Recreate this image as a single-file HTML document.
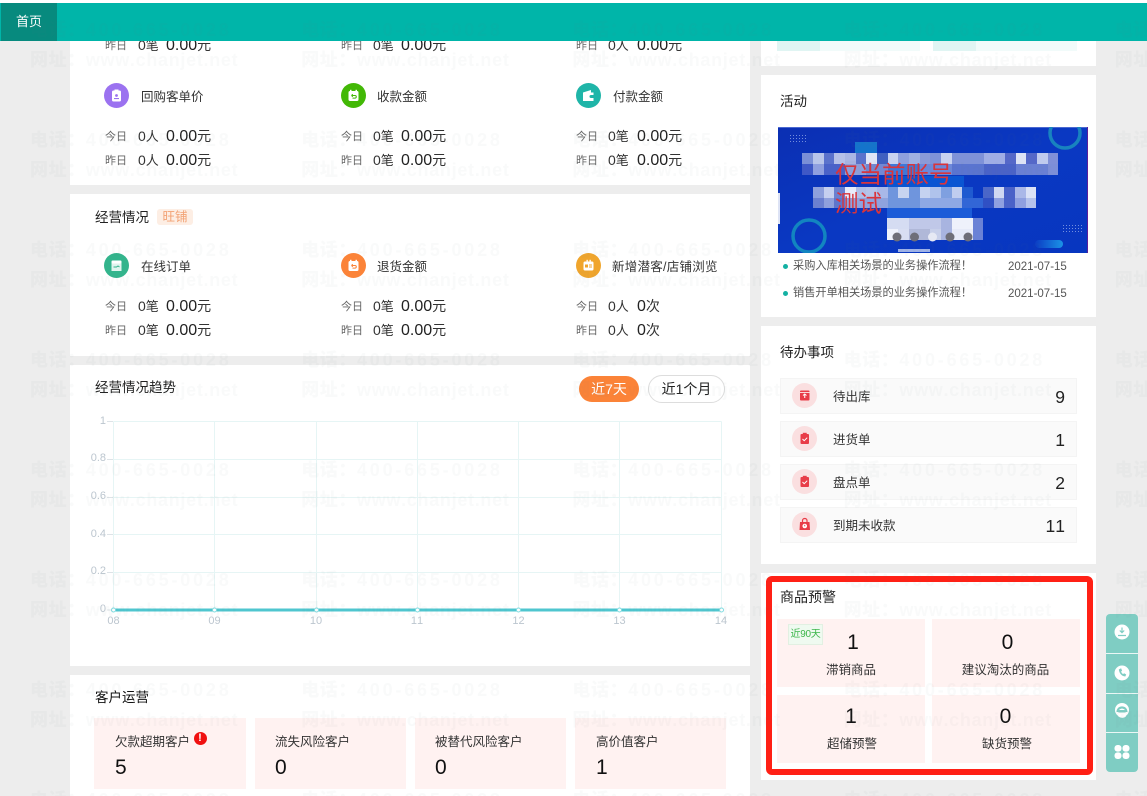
<!DOCTYPE html>
<html lang="zh"><head><meta charset="utf-8"><title>首页</title>
<style>
html,body{margin:0;padding:0;width:1147px;height:796px;overflow:hidden}
body{background:#ededed;font-family:"Liberation Sans","Noto Sans CJK SC",sans-serif;color:#333;font-kerning:none}
#p{position:relative;width:1147px;height:796px;overflow:hidden}
.c,.b,.t,.ic{position:absolute}
.c{background:#fff}
.b{box-sizing:border-box}
.t{white-space:nowrap;line-height:20px;font-size:12.5px}
.h{font-size:13.5px;color:#222;margin-top:1px}
.l{font-size:11px;color:#666}
.v{font-size:14px;color:#333}
.v small{font-size:13px}
.a{font-size:16px;color:#222;margin-top:1px}
.a small{font-size:14px;color:#333}
.ic{width:25px;height:25px;border-radius:50%}
.ic svg{position:absolute;left:0;top:0;width:25px;height:25px}
.pk{background:#fff2f1}
.td{background:#fafafa;border:1px solid #f4f4f4;left:780px;width:297px;height:36px}
.n{font-size:17.5px;color:#222;margin-top:1px}
.big{font-size:21px;color:#111;transform:translateX(-50%);margin-top:1px}
.ctr{transform:translateX(-50%)}
.li{font-size:11.2px;color:#555}
.dt{font-size:11.5px;color:#555;margin-top:1px}
.wm{position:absolute;left:30px;white-space:nowrap;font-size:18px;line-height:24px;color:rgba(110,115,125,.038);font-weight:bold;z-index:50;pointer-events:none}
.wm i{font-style:normal;display:inline-block;width:271.2px}
.wm b{letter-spacing:.6px}
.wp{letter-spacing:2.8px}
.wu{letter-spacing:.7px;margin-top:-1px}
.y{position:absolute;font-size:11px;line-height:12px;color:#bcc6cf;text-align:right;width:30px;left:76px}
.x{position:absolute;font-size:11px;line-height:12px;color:#bcc6cf;width:30px;text-align:center;top:615px}
</style></head>
<body><div id="p">
<!-- cards -->
<div class="c" style="left:70px;top:30px;width:680px;height:155px"></div>
<div class="c" style="left:70px;top:194px;width:680px;height:162px"></div>
<div class="c" style="left:70px;top:365px;width:680px;height:301px"></div>
<div class="c" style="left:70px;top:675px;width:680px;height:130px"></div>
<div class="c" style="left:761px;top:30px;width:335px;height:36px"></div>
<div class="c" style="left:761px;top:75px;width:335px;height:242px"></div>
<div class="c" style="left:761px;top:326px;width:335px;height:238px"></div>
<div class="c" style="left:761px;top:573px;width:335px;height:207px"></div>

<!-- top section -->
<div class="b" style="left:777px;top:41px;width:43px;height:10px;background:#e0f5f3"></div>
<div class="b" style="left:820px;top:41px;width:100px;height:10px;background:#f1fbfa"></div>
<div class="b" style="left:933px;top:41px;width:43px;height:10px;background:#e0f5f3"></div>
<div class="b" style="left:976px;top:41px;width:101px;height:10px;background:#f1fbfa"></div>

<div class="t l" style="left:105px;top:36px">昨日</div><div class="t v" style="left:138px;top:35px">0<small>笔</small></div><div class="t a" style="left:166px;top:34px">0.00<small>元</small></div>
<div class="t l" style="left:341px;top:36px">昨日</div><div class="t v" style="left:373px;top:35px">0<small>笔</small></div><div class="t a" style="left:401px;top:34px">0.00<small>元</small></div>
<div class="t l" style="left:576px;top:36px">昨日</div><div class="t v" style="left:608px;top:35px">0<small>人</small></div><div class="t a" style="left:637px;top:34px">0.00<small>元</small></div>

<!-- row: repurchase -->
<div class="ic" style="left:104px;top:83px;background:#9b72f0"><svg viewBox="0 0 25 25"><path d="M8 9a1.500 1.500 0 0 1 1.500-1.500h1V6.500h4v1h1A1.500 1.500 0 0 1 17 9v8a1.500 1.500 0 0 1-1.500 1.500h-6A1.500 1.500 0 0 1 8 17z" fill="#fff"/><circle cx="12.500" cy="12.500" r="1.400" fill="#9b72f0"/><rect x="10" y="15" width="5" height="1.100" fill="#9b72f0"/></svg></div>
<div class="t" style="left:141px;top:87px">回购客单价</div>
<div class="ic" style="left:341px;top:83px;background:#42b806"><svg viewBox="0 0 25 25"><rect x="7.500" y="8" width="10" height="10" rx="1.500" fill="#fff"/><rect x="9" y="6.800" width="1.500" height="2.500" fill="#fff"/><rect x="14.500" y="6.800" width="1.500" height="2.500" fill="#fff"/><path d="M10.500 12.500h3.500a1.300 1.300 0 0 1 0 2.600h-2.500M10.500 12.500l1.300-1.300M10.500 12.500l1.300 1.300" stroke="#42b806" stroke-width="1" fill="none"/></svg></div>
<div class="t" style="left:377px;top:87px">收款金额</div>
<div class="ic" style="left:576px;top:83px;background:#1fb5a8"><svg viewBox="0 0 25 25"><path d="M7 9.500 15 7v2.500h2.500V12H15a1.500 1.500 0 0 0 0 3h2.500v3H7z" fill="#fff"/></svg></div>
<div class="t" style="left:613px;top:87px">付款金额</div>

<div class="t l" style="left:105px;top:127px">今日</div><div class="t v" style="left:138px;top:126px">0<small>人</small></div><div class="t a" style="left:166px;top:125px">0.00<small>元</small></div>
<div class="t l" style="left:105px;top:151px">昨日</div><div class="t v" style="left:138px;top:150px">0<small>人</small></div><div class="t a" style="left:166px;top:149px">0.00<small>元</small></div>
<div class="t l" style="left:341px;top:127px">今日</div><div class="t v" style="left:373px;top:126px">0<small>笔</small></div><div class="t a" style="left:401px;top:125px">0.00<small>元</small></div>
<div class="t l" style="left:341px;top:151px">昨日</div><div class="t v" style="left:373px;top:150px">0<small>笔</small></div><div class="t a" style="left:401px;top:149px">0.00<small>元</small></div>
<div class="t l" style="left:576px;top:127px">今日</div><div class="t v" style="left:608px;top:126px">0<small>笔</small></div><div class="t a" style="left:637px;top:125px">0.00<small>元</small></div>
<div class="t l" style="left:576px;top:151px">昨日</div><div class="t v" style="left:608px;top:150px">0<small>笔</small></div><div class="t a" style="left:637px;top:149px">0.00<small>元</small></div>

<!-- operating -->
<div class="t h" style="left:95px;top:207px">经营情况</div>
<div class="t" style="left:157px;top:209px;width:36px;height:16px;line-height:16px;background:#fdeee4;color:#f2a274;border-radius:3px;text-align:center;font-size:12.5px">旺铺</div>

<div class="ic" style="left:104px;top:253px;background:#33b48c"><svg viewBox="0 0 25 25"><path d="M7.500 9h10v9h-10z" fill="#fff" opacity=".85"/><rect x="7.500" y="7.500" width="10" height="3" rx="1" fill="#fff"/><path d="M9.500 14h3l1.500-1 1.500 1" stroke="#33b48c" fill="none"/></svg></div>
<div class="t" style="left:141px;top:257px">在线订单</div>
<div class="ic" style="left:341px;top:253px;background:#fb8338"><svg viewBox="0 0 25 25"><rect x="7.500" y="8" width="10" height="10" rx="1.500" fill="#fff"/><rect x="9" y="6.800" width="1.500" height="2.500" fill="#fff"/><rect x="14.500" y="6.800" width="1.500" height="2.500" fill="#fff"/><path d="M10.500 12.500h3.500a1.300 1.300 0 0 1 0 2.600h-2.500M10.500 12.500l1.300-1.300M10.500 12.500l1.300 1.300" stroke="#fb8338" stroke-width="1" fill="none"/></svg></div>
<div class="t" style="left:377px;top:257px">退货金额</div>
<div class="ic" style="left:576px;top:253px;background:#f0a52c"><svg viewBox="0 0 25 25"><rect x="7.500" y="8.500" width="10" height="9" rx="1.500" fill="#fff"/><rect x="10.500" y="6.800" width="1.300" height="3" fill="#fff"/><rect x="13.500" y="6.800" width="1.300" height="3" fill="#fff"/><rect x="9" y="11.500" width="3" height="3" fill="#f0a52c"/><rect x="13" y="11.500" width="3" height="1" fill="#f0a52c"/><rect x="13" y="13.500" width="3" height="1" fill="#f0a52c"/></svg></div>
<div class="t" style="left:612px;top:257px;letter-spacing:.25px">新增潜客/店铺浏览</div>

<div class="t l" style="left:105px;top:297px">今日</div><div class="t v" style="left:138px;top:296px">0<small>笔</small></div><div class="t a" style="left:166px;top:295px">0.00<small>元</small></div>
<div class="t l" style="left:105px;top:321px">昨日</div><div class="t v" style="left:138px;top:320px">0<small>笔</small></div><div class="t a" style="left:166px;top:319px">0.00<small>元</small></div>
<div class="t l" style="left:341px;top:297px">今日</div><div class="t v" style="left:373px;top:296px">0<small>笔</small></div><div class="t a" style="left:401px;top:295px">0.00<small>元</small></div>
<div class="t l" style="left:341px;top:321px">昨日</div><div class="t v" style="left:373px;top:320px">0<small>笔</small></div><div class="t a" style="left:401px;top:319px">0.00<small>元</small></div>
<div class="t l" style="left:576px;top:297px">今日</div><div class="t v" style="left:608px;top:296px">0<small>人</small></div><div class="t a" style="left:637px;top:295px">0<small>次</small></div>
<div class="t l" style="left:576px;top:321px">昨日</div><div class="t v" style="left:608px;top:320px">0<small>人</small></div><div class="t a" style="left:637px;top:319px">0<small>次</small></div>

<!-- trend -->
<div class="t h" style="left:95px;top:377px">经营情况趋势</div>
<div class="t" style="left:579px;top:376px;width:60px;height:26px;line-height:26px;border-radius:13px;background:#fb8338;color:#fff;text-align:center;font-size:14px">近7天</div>
<div class="t b" style="left:648px;top:375px;width:77px;height:28px;line-height:26px;border-radius:14px;border:1px solid #ddd;background:#fff;color:#222;text-align:center;font-size:14px">近1个月</div>

<svg class="b" style="left:100px;top:410px" width="640" height="210" viewBox="100 410 640 210">
<g stroke="#e6f5f5" stroke-width="1" fill="none">
<path d="M113.500 421.500H721.500M113.500 459.500H721.500M113.500 497.500H721.500M113.500 534.500H721.500M113.500 572.500H721.500"/>
<path d="M113.500 421.500V610M214.500 421.500V610M316.500 421.500V610M417.500 421.500V610M518.500 421.500V610M619.500 421.500V610M721.500 421.500V610"/>
</g>
<path d="M107 421.500h6M107 459.500h6M107 497.500h6M107 534.500h6M107 572.500h6M107 610h6" stroke="#dde3e7"/>
<path d="M113.500 610H721.500" stroke="#4fc6cf" stroke-width="3"/>
<g fill="#fff" stroke="#7fdbe0" stroke-width="1">
<circle cx="113.500" cy="610" r="2"/><circle cx="214.500" cy="610" r="2"/><circle cx="316.500" cy="610" r="2"/><circle cx="417.500" cy="610" r="2"/><circle cx="518.500" cy="610" r="2"/><circle cx="619.500" cy="610" r="2"/><circle cx="721.500" cy="610" r="2"/>
</g>
</svg>
<div class="y" style="top:415px">1</div>
<div class="y" style="top:452px">0.8</div>
<div class="y" style="top:490px">0.6</div>
<div class="y" style="top:528px">0.4</div>
<div class="y" style="top:565px">0.2</div>
<div class="y" style="top:603px">0</div>
<div class="x" style="left:98.500px">08</div>
<div class="x" style="left:199.500px">09</div>
<div class="x" style="left:301px">10</div>
<div class="x" style="left:402px">11</div>
<div class="x" style="left:503.500px">12</div>
<div class="x" style="left:604.500px">13</div>
<div class="x" style="left:706px">14</div>

<!-- customers -->
<div class="t h" style="left:95px;top:687px;color:#111">客户运营</div>
<div class="b pk" style="left:94px;top:718px;width:152px;height:71px"></div>
<div class="b pk" style="left:255px;top:718px;width:151px;height:71px"></div>
<div class="b pk" style="left:415px;top:718px;width:151px;height:71px"></div>
<div class="b pk" style="left:575px;top:718px;width:151px;height:71px"></div>
<div class="t" style="left:115px;top:732px">欠款超期客户</div>
<div class="b" style="left:193.500px;top:732px;width:13px;height:13px;border-radius:50%;background:#f01010;color:#fff;font-size:11px;line-height:13px;text-align:center;font-weight:bold">!</div>
<div class="t" style="left:275px;top:732px">流失风险客户</div>
<div class="t" style="left:435px;top:732px">被替代风险客户</div>
<div class="t" style="left:596px;top:732px">高价值客户</div>
<div class="t" style="left:115px;top:758px;font-size:21px;color:#111">5</div>
<div class="t" style="left:275px;top:758px;font-size:21px;color:#111">0</div>
<div class="t" style="left:435px;top:758px;font-size:21px;color:#111">0</div>
<div class="t" style="left:596px;top:758px;font-size:21px;color:#111">1</div>

<!-- activity -->
<div class="t" style="left:780px;top:92px;font-size:13.5px;color:#222">活动</div>
<svg class="b" style="left:778px;top:127px" width="310" height="126" viewBox="778 127 310 126">
<defs><linearGradient id="bg" x1="0" y1="0" x2="1" y2="1"><stop offset="0" stop-color="#0b2fb3"/><stop offset=".5" stop-color="#0a38c2"/><stop offset="1" stop-color="#0736c0"/></linearGradient><linearGradient id="bar" x1="0" x2="1"><stop offset="0" stop-color="#0b3cc4"/><stop offset="1" stop-color="#1b93e6"/></linearGradient></defs>
<rect x="778" y="127" width="309" height="126" fill="url(#bg)"/>
<rect x="1087" y="127" width="1" height="126" fill="#5a1f9a"/>
<rect x="778" y="127" width="309" height="1" fill="#4a68d0"/>
<rect x="778" y="193" width="2" height="31" fill="#dde3f5"/>
<rect x="855" y="142" width="22" height="11" fill="#1474cc"/>
<rect x="887" y="176" width="77" height="44" fill="#0a55d2"/>
<rect x="887" y="208" width="85" height="11" fill="#1c5cd8"/>
<circle cx="1065" cy="133" r="15" fill="none" stroke="#1883bf" stroke-width="3.500"/>
<circle cx="809" cy="236" r="16" fill="none" stroke="#1285c0" stroke-width="3.500"/>
<rect x="1035" y="240" width="28" height="8" rx="4" fill="url(#bar)"/>
<path d="M790 135.500h17M790 138.500h17M790 141.500h17M1063 225.500h19M1063 228.500h19M1063 231.500h19" stroke="#8fa6e6" stroke-width="1" stroke-dasharray="1 2" opacity=".8"/>
<g>
<rect x="802" y="153" width="11" height="11" fill="#7a8fd6"/><rect x="813" y="153" width="11" height="11" fill="#b9c5ea"/><rect x="824" y="153" width="10" height="11" fill="#5b72cc"/><rect x="834" y="153" width="11" height="11" fill="#b5c0e8"/><rect x="845" y="153" width="11" height="11" fill="#a9b6e4"/><rect x="856" y="153" width="10" height="11" fill="#5b72cc"/><rect x="866" y="153" width="11" height="11" fill="#e0e5f6"/><rect x="877" y="153" width="11" height="11" fill="#4060c0"/><rect x="888" y="153" width="10" height="11" fill="#c8d2f0"/><rect x="898" y="153" width="11" height="11" fill="#8fa0dd"/><rect x="909" y="153" width="11" height="11" fill="#9fb0e2"/><rect x="920" y="153" width="10" height="11" fill="#8a9ad8"/><rect x="930" y="153" width="11" height="11" fill="#7f92d8"/><rect x="941" y="153" width="11" height="11" fill="#c8d2f0"/><rect x="952" y="153" width="32" height="11" fill="#7f92d8"/><rect x="984" y="153" width="21" height="11" fill="#a0aee5"/><rect x="1005" y="153" width="11" height="11" fill="#5568c8"/><rect x="1016" y="153" width="10" height="11" fill="#dde3f5"/><rect x="1026" y="153" width="11" height="11" fill="#5568c8"/><rect x="1037" y="153" width="11" height="11" fill="#c0cbee"/><rect x="1048" y="153" width="10" height="11" fill="#8090d8"/>
<rect x="802" y="164" width="11" height="11" fill="#3f58c6"/><rect x="813" y="164" width="11" height="11" fill="#8f9fdf"/><rect x="824" y="164" width="21" height="11" fill="#4a62c8"/><rect x="845" y="164" width="21" height="11" fill="#8fa0dc"/><rect x="866" y="164" width="22" height="11" fill="#7388d4"/><rect x="888" y="164" width="32" height="11" fill="#3f78d8"/><rect x="920" y="164" width="32" height="11" fill="#6d88da"/><rect x="952" y="164" width="32" height="11" fill="#5a74d0"/><rect x="984" y="164" width="32" height="11" fill="#4a62c8"/><rect x="1016" y="164" width="32" height="11" fill="#6a80d4"/><rect x="1048" y="164" width="10" height="11" fill="#7d8fd8"/>
<rect x="813" y="187" width="11" height="11" fill="#8ea0dc"/><rect x="824" y="187" width="10" height="11" fill="#c5cfef"/><rect x="834" y="187" width="11" height="11" fill="#6a80d0"/><rect x="845" y="187" width="11" height="11" fill="#e8ecfa"/><rect x="856" y="187" width="10" height="11" fill="#b0bfe8"/><rect x="866" y="187" width="11" height="11" fill="#b5c3ea"/><rect x="877" y="187" width="11" height="11" fill="#a8b8e8"/><rect x="888" y="187" width="10" height="11" fill="#6f95dd"/><rect x="898" y="187" width="11" height="11" fill="#c8d4f0"/><rect x="909" y="187" width="11" height="11" fill="#6f95dd"/><rect x="920" y="187" width="10" height="11" fill="#c5d2f0"/><rect x="930" y="187" width="11" height="11" fill="#b0c3ec"/><rect x="941" y="187" width="11" height="11" fill="#7fa0e0"/><rect x="952" y="187" width="10" height="11" fill="#c0cdef"/><rect x="962" y="187" width="11" height="11" fill="#1f5ad0"/><rect x="983" y="187" width="11" height="11" fill="#4a66c8"/><rect x="994" y="187" width="10" height="11" fill="#d0d8f2"/><rect x="1004" y="187" width="11" height="11" fill="#4a62c8"/><rect x="1015" y="187" width="11" height="11" fill="#aab8e8"/><rect x="1026" y="187" width="10" height="11" fill="#dbe2f6"/>
<rect x="813" y="198" width="11" height="10" fill="#6b80d0"/><rect x="824" y="198" width="10" height="10" fill="#8fa0dc"/><rect x="834" y="198" width="11" height="10" fill="#5f75cc"/><rect x="845" y="198" width="43" height="10" fill="#8fa3de"/><rect x="888" y="198" width="32" height="10" fill="#6f95dd"/><rect x="920" y="198" width="42" height="10" fill="#8ea8e4"/><rect x="962" y="198" width="21" height="10" fill="#3266d6"/><rect x="983" y="198" width="11" height="10" fill="#3050c4"/><rect x="994" y="198" width="10" height="10" fill="#8fa0e0"/><rect x="1004" y="198" width="11" height="10" fill="#4a62c8"/><rect x="1015" y="198" width="11" height="10" fill="#8fa0e0"/><rect x="1026" y="198" width="10" height="10" fill="#b5c3ec"/>
<rect x="887" y="218" width="22" height="11" fill="#d5dcf2"/><rect x="909" y="218" width="32" height="11" fill="#c0c8e8"/><rect x="941" y="218" width="11" height="11" fill="#a8b4e0"/><rect x="952" y="218" width="21" height="11" fill="#eef1fb"/><rect x="973" y="218" width="10" height="11" fill="#6a82d6"/>
<rect x="887" y="229" width="11" height="11" fill="#eef1fb"/><rect x="898" y="229" width="11" height="11" fill="#d8def2"/><rect x="909" y="229" width="21" height="11" fill="#b0b8d8"/><rect x="930" y="229" width="11" height="11" fill="#c8d0ea"/><rect x="941" y="229" width="11" height="11" fill="#a8b4e0"/><rect x="952" y="229" width="21" height="11" fill="#e6eaf8"/><rect x="973" y="229" width="10" height="11" fill="#6a82d6"/>
<rect x="898" y="249" width="32" height="3" fill="#9fb2e8"/>
</g>
<g fill="#6e6e78"><circle cx="897" cy="237" r="4.500"/><circle cx="914.500" cy="237" r="4.500"/><circle cx="950" cy="237" r="4.500"/><circle cx="968" cy="237" r="4.500"/></g>
<circle cx="932.500" cy="237" r="4.500" fill="#e6e9f4"/>
<text x="835" y="182.500" font-size="23.500" fill="#d9343c" font-family="Liberation Sans,Noto Sans CJK SC,sans-serif">仅当前账号</text>
<text x="835" y="211.500" font-size="23.500" fill="#d9343c" font-family="Liberation Sans,Noto Sans CJK SC,sans-serif">测试</text>
</svg>
<div class="b" style="left:783px;top:264px;width:5px;height:5px;border-radius:50%;background:#14b1a3"></div>
<div class="b" style="left:783px;top:291px;width:5px;height:5px;border-radius:50%;background:#14b1a3"></div>
<div class="t li" style="left:793px;top:256px">采购入库相关场景的业务操作流程！</div>
<div class="t li" style="left:793px;top:283px">销售开单相关场景的业务操作流程！</div>
<div class="t dt" style="left:1008px;top:256px">2021-07-15</div>
<div class="t dt" style="left:1008px;top:283px">2021-07-15</div>

<!-- todo -->
<div class="t" style="left:780px;top:343px;font-size:13.500px;color:#222">待办事项</div>
<div class="b td" style="top:378px"></div>
<div class="b td" style="top:421px"></div>
<div class="b td" style="top:464px"></div>
<div class="b td" style="top:507px"></div>
<div class="ic" style="left:792px;top:383px;background:#fadfe0"><svg viewBox="0 0 25 25"><rect x="8" y="7.500" width="9.500" height="10" rx="1" fill="#e83c48"/><path d="M8 9.500h9.500" stroke="#fff" stroke-width=".8"/><path d="M12.750 11v4M11 12.500l1.750-1.500 1.750 1.500" stroke="#fff" stroke-width="1" fill="none"/></svg></div>
<div class="ic" style="left:792px;top:426px;background:#fadfe0"><svg viewBox="0 0 25 25"><rect x="8.500" y="8" width="8.500" height="10" rx="1" fill="#e83c48"/><rect x="10.800" y="6.800" width="3.900" height="2.400" fill="#e83c48"/><path d="M10.500 13l1.700 1.700 3-3" stroke="#fff" stroke-width="1" fill="none"/></svg></div>
<div class="ic" style="left:792px;top:469px;background:#fadfe0"><svg viewBox="0 0 25 25"><rect x="8.500" y="8" width="8.500" height="10" rx="1" fill="#e83c48"/><rect x="10.800" y="6.800" width="3.900" height="2.400" fill="#e83c48"/><path d="M10.500 13l1.700 1.700 3-3" stroke="#fff" stroke-width="1" fill="none"/></svg></div>
<div class="ic" style="left:792px;top:512px;background:#fadfe0"><svg viewBox="0 0 25 25"><path d="M8 10h9.500l.5 8H7.500z" fill="#e83c48"/><path d="M10.500 10V8.500a2.250 2 0 0 1 4.500 0V10" stroke="#e83c48" stroke-width="1.200" fill="none"/><circle cx="12.750" cy="14" r="2.300" fill="#fff"/><path d="M12.750 12.800v1.500" stroke="#e83c48"/></svg></div>
<div class="t" style="left:833px;top:387px">待出库</div>
<div class="t" style="left:833px;top:430px">进货单</div>
<div class="t" style="left:833px;top:473px">盘点单</div>
<div class="t" style="left:833px;top:516px">到期未收款</div>
<div class="t n" style="right:82px;top:386px">9</div>
<div class="t n" style="right:82px;top:429px">1</div>
<div class="t n" style="right:82px;top:472px">2</div>
<div class="t n" style="right:82px;top:515px">11</div>

<!-- warnings -->
<div class="t" style="left:780px;top:587px;font-size:14px;color:#222">商品预警</div>
<div class="b pk" style="left:777px;top:619px;width:148px;height:68px"></div>
<div class="b pk" style="left:932px;top:619px;width:148px;height:68px"></div>
<div class="b pk" style="left:777px;top:695px;width:148px;height:68px"></div>
<div class="b pk" style="left:932px;top:695px;width:148px;height:68px"></div>
<div class="t" style="left:788px;top:624px;width:35px;height:21px;background:#effaf0;border:1px solid #e2f0e2;box-sizing:border-box;color:#3cb64a;font-size:10px;text-align:center;line-height:19px;letter-spacing:-.3px">近90天</div>
<div class="t big" style="left:853px;top:632px">1</div>
<div class="t big" style="left:1007.500px;top:632px">0</div>
<div class="t big" style="left:851px;top:706px">1</div>
<div class="t big" style="left:1005.500px;top:706px">0</div>
<div class="t ctr" style="left:851px;top:660px">滞销商品</div>
<div class="t ctr" style="left:1005.500px;top:660px">建议淘汰的商品</div>
<div class="t ctr" style="left:852px;top:734px">超储预警</div>
<div class="t ctr" style="left:1007px;top:734px">缺货预警</div>
<div class="b" style="left:766px;top:576px;width:327px;height:199px;border:6px solid #ff2015;border-radius:6px"></div>

<!-- float -->
<div class="b" style="left:1106px;top:614px;width:32px;height:158px;background:#7fcdc3;border-radius:4px"></div>
<div class="b" style="left:1106px;top:653px;width:32px;height:1px;background:#eaf7f5"></div>
<div class="b" style="left:1106px;top:693px;width:32px;height:1px;background:#eaf7f5"></div>
<div class="b" style="left:1106px;top:732px;width:32px;height:1px;background:#eaf7f5"></div>
<svg class="b" style="left:1106px;top:614px" width="32" height="158" viewBox="0 0 32 158">
<circle cx="16" cy="18" r="7.500" fill="#fff"/><path d="M16 13.500v5M13.800 16.500l2.200 2.200 2.200-2.200M12 21.500h8" stroke="#7fcdc3" stroke-width="1.200" fill="none"/>
<circle cx="16" cy="59" r="7.500" fill="#fff"/><path d="M12.800 55.500c.5 4 3 6.700 6.500 7l.9-2-2.100-1.200-1 .8c-1-.6-1.700-1.500-2-2.600l1-.8-1-2.500z" fill="#7fcdc3"/>
<circle cx="16" cy="96" r="7" fill="#fff"/><path d="M10.500 98c0-7.500 11-7.500 11 0h-1.500c-1-4.500-7-4.500-8 0z" fill="#7fcdc3"/><rect x="12" y="96" width="8" height="2.500" rx="1" fill="#7fcdc3"/><path d="M12.500 101.500c2 2 5 2 7 .5" stroke="#fff" stroke-width="1.500" fill="none"/>
<g fill="#fff"><rect x="8.500" y="131" width="7" height="6.600" rx="3"/><rect x="16.500" y="131" width="7" height="6.600" rx="3"/><rect x="8.500" y="138.400" width="7" height="6.600" rx="3"/><rect x="16.500" y="138.400" width="7" height="6.600" rx="3"/></g>
</svg>

<!-- header -->
<div class="b" style="left:0;top:0;width:1147px;height:3px;background:#fff"></div>
<div class="b" style="left:0;top:3px;width:1147px;height:38px;background:#00b5a9"></div>
<div class="b" style="left:1px;top:3px;width:56px;height:38px;background:#078a7e;color:#fff;font-size:13px;line-height:38px;text-align:center">首页</div>

<!-- watermark -->
<div class="wm wp" style="top:18px"><i><b>电话：</b>400-665-0028</i><i><b>电话：</b>400-665-0028</i><i><b>电话：</b>400-665-0028</i><i><b>电话：</b>400-665-0028</i><i><b>电话：</b>400-665-0028</i></div>
<div class="wm wu" style="top:49px"><i><b>网址：</b>www.chanjet.net</i><i><b>网址：</b>www.chanjet.net</i><i><b>网址：</b>www.chanjet.net</i><i><b>网址：</b>www.chanjet.net</i><i><b>网址：</b>www.chanjet.net</i></div>
<div class="wm wp" style="top:128px"><i><b>电话：</b>400-665-0028</i><i><b>电话：</b>400-665-0028</i><i><b>电话：</b>400-665-0028</i><i><b>电话：</b>400-665-0028</i><i><b>电话：</b>400-665-0028</i></div>
<div class="wm wu" style="top:159px"><i><b>网址：</b>www.chanjet.net</i><i><b>网址：</b>www.chanjet.net</i><i><b>网址：</b>www.chanjet.net</i><i><b>网址：</b>www.chanjet.net</i><i><b>网址：</b>www.chanjet.net</i></div>
<div class="wm wp" style="top:238px"><i><b>电话：</b>400-665-0028</i><i><b>电话：</b>400-665-0028</i><i><b>电话：</b>400-665-0028</i><i><b>电话：</b>400-665-0028</i><i><b>电话：</b>400-665-0028</i></div>
<div class="wm wu" style="top:269px"><i><b>网址：</b>www.chanjet.net</i><i><b>网址：</b>www.chanjet.net</i><i><b>网址：</b>www.chanjet.net</i><i><b>网址：</b>www.chanjet.net</i><i><b>网址：</b>www.chanjet.net</i></div>
<div class="wm wp" style="top:348px"><i><b>电话：</b>400-665-0028</i><i><b>电话：</b>400-665-0028</i><i><b>电话：</b>400-665-0028</i><i><b>电话：</b>400-665-0028</i><i><b>电话：</b>400-665-0028</i></div>
<div class="wm wu" style="top:379px"><i><b>网址：</b>www.chanjet.net</i><i><b>网址：</b>www.chanjet.net</i><i><b>网址：</b>www.chanjet.net</i><i><b>网址：</b>www.chanjet.net</i><i><b>网址：</b>www.chanjet.net</i></div>
<div class="wm wp" style="top:458px"><i><b>电话：</b>400-665-0028</i><i><b>电话：</b>400-665-0028</i><i><b>电话：</b>400-665-0028</i><i><b>电话：</b>400-665-0028</i><i><b>电话：</b>400-665-0028</i></div>
<div class="wm wu" style="top:489px"><i><b>网址：</b>www.chanjet.net</i><i><b>网址：</b>www.chanjet.net</i><i><b>网址：</b>www.chanjet.net</i><i><b>网址：</b>www.chanjet.net</i><i><b>网址：</b>www.chanjet.net</i></div>
<div class="wm wp" style="top:568px"><i><b>电话：</b>400-665-0028</i><i><b>电话：</b>400-665-0028</i><i><b>电话：</b>400-665-0028</i><i><b>电话：</b>400-665-0028</i><i><b>电话：</b>400-665-0028</i></div>
<div class="wm wu" style="top:599px"><i><b>网址：</b>www.chanjet.net</i><i><b>网址：</b>www.chanjet.net</i><i><b>网址：</b>www.chanjet.net</i><i><b>网址：</b>www.chanjet.net</i><i><b>网址：</b>www.chanjet.net</i></div>
<div class="wm wp" style="top:678px"><i><b>电话：</b>400-665-0028</i><i><b>电话：</b>400-665-0028</i><i><b>电话：</b>400-665-0028</i><i><b>电话：</b>400-665-0028</i><i><b>电话：</b>400-665-0028</i></div>
<div class="wm wu" style="top:709px"><i><b>网址：</b>www.chanjet.net</i><i><b>网址：</b>www.chanjet.net</i><i><b>网址：</b>www.chanjet.net</i><i><b>网址：</b>www.chanjet.net</i><i><b>网址：</b>www.chanjet.net</i></div>
<div class="wm wp" style="top:788px"><i><b>电话：</b>400-665-0028</i><i><b>电话：</b>400-665-0028</i><i><b>电话：</b>400-665-0028</i><i><b>电话：</b>400-665-0028</i><i><b>电话：</b>400-665-0028</i></div>
</div></body></html>
